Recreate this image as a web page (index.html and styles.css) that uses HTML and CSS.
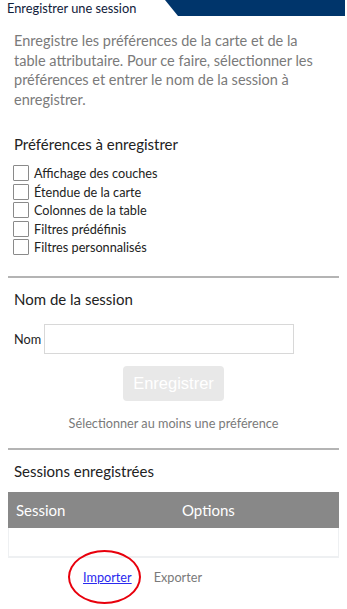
FILE: index.html
```html
<!DOCTYPE html>
<html lang="fr">
<head>
<meta charset="utf-8">
<link rel="stylesheet" href="styles.css">
</head>
<body>
<div class="panel">
  <div class="tabbar">
    <div class="tab">Enregistrer une session</div>
    <div class="band"></div>
  </div>
  <div class="content">
    <p class="desc">Enregistre les préférences de la carte et de la table attributaire. Pour ce faire, sélectionner les préférences et entrer le nom de la session à enregistrer.</p>

    <h3 class="heading h-prefs">Préférences à enregistrer</h3>
    <ul class="checks">
      <li><span class="box"></span>Affichage des couches</li>
      <li><span class="box"></span>Étendue de la carte</li>
      <li><span class="box"></span>Colonnes de la table</li>
      <li><span class="box"></span>Filtres prédéfinis</li>
      <li><span class="box"></span>Filtres personnalisés</li>
    </ul>
    <hr class="sep sep1">

    <h3 class="heading h-name">Nom de la session</h3>
    <div class="namerow">
      <label class="namelabel">Nom</label>
      <div class="input"></div>
    </div>
    <div class="btnrow"><button class="btn">Enregistrer</button></div>
    <p class="hint">Sélectionner au moins une préférence</p>
    <hr class="sep sep2">

    <h3 class="heading h-saved">Sessions enregistrées</h3>
    <div class="table">
      <div class="thead"><span class="col1">Session</span><span class="col2">Options</span></div>
      <div class="tbody"></div>
    </div>
    <div class="links">
      <a class="link-import" href="#">Importer</a>
      <span class="link-export">Exporter</span>
      <span class="circle"></span>
    </div>
  </div>
</div>
</body>
</html>
```
FILE: styles.css
```css
* { box-sizing: border-box; }
html, body { margin: 0; padding: 0; background: #fff; }
body { font-family: Lato, "Noto Sans", sans-serif; color: #1f1f1f; width: 347px; }
.panel { width: 347px; }
.tabbar { display: flex; height: 16px; }
.tab { width: 165px; padding-left: 7px; font-size: 12.8px; line-height: 16px; color: #10203a; background: #fff; white-space: nowrap; }
.band { flex: 1; margin-right: 2px; background: #00356b; clip-path: polygon(0 0, 100% 0, 100% 100%, 13px 100%); }
.content { padding: 0 8px; }
.desc { margin: 15px 0 0 6px; width: 318px; font-size: 14.5px; line-height: 19.5px; color: #7a7a7a; }
.heading { margin: 0 0 0 6px; font-weight: normal; font-size: 15px; color: #222; }
.h-prefs { margin-top: 25px; line-height: 20px; }
.checks { list-style: none; margin: 10px 0 0 5px; padding: 0; }
.checks li { display: flex; align-items: center; height: 18.5px; font-size: 12.7px; color: #222; }
.box { width: 16px; height: 16px; border: 1px solid #8a8a8a; border-radius: 1px; margin-right: 5px; background: #fff; }
.sep { border: 0; height: 2px; background: #b4b4b4; margin: 0; }
.sep1 { margin-top: 19px; }
.h-name { margin-top: 11px; line-height: 20px; }
.namerow { display: flex; align-items: center; margin: 15px 0 0 6px; }
.namelabel { font-size: 12.7px; color: #222; margin-right: 3px; }
.input { width: 250px; height: 30px; border: 1px solid #d8d8d8; background: #fff; }
.btnrow { display: flex; margin-top: 12px; padding-left: 115px; }
.btn { width: 101px; height: 35px; border: 0; border-radius: 4px; background: #e8e8e8; color: #fff; font-family: "Liberation Sans", Arial, sans-serif; font-size: 16.5px; padding: 0; }
.hint { margin: 14px 0 0; text-align: center; font-size: 12.7px; line-height: 16px; color: #7a7a7a; }
.sep2 { margin-top: 17px; }
.h-saved { margin-top: 11px; line-height: 20px; }
.table { margin-top: 11px; width: 331px; }
.thead { display: flex; height: 36px; align-items: center; background: #888; color: #fff; font-size: 15px; }
.col1 { width: 166px; padding-left: 8px; }
.col2 { padding-left: 8px; }
.tbody { height: 30px; border: 1px solid #eef0f2; border-top: 0; border-bottom-width: 2px; }
.links { position: relative; display: flex; gap: 22px; margin-top: 11px; padding-left: 75px; padding-bottom: 30px; font-size: 12.7px; line-height: 16px; }
.link-import { color: #2a2aee; text-decoration: underline; }
.link-export { color: #7a7a7a; }
.circle { position: absolute; left: 60px; top: -19px; width: 73px; height: 54px; border: 2.5px solid #e8000c; border-radius: 50%; }
```
